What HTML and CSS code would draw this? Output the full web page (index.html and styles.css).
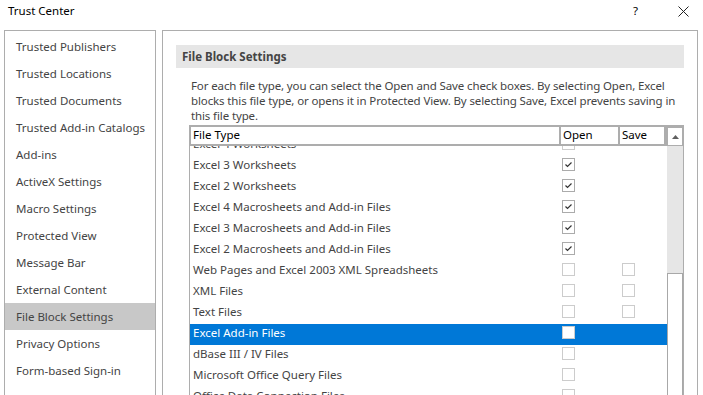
FILE: index.html
```html
<!DOCTYPE html>
<html lang="en">
<head>
    <meta charset="UTF-8">
    <title>Trust Center</title>
    <link rel="stylesheet" href="styles.css">
</head>
<body>
    <div class="titlebar">
        <div class="title">Trust Center</div>
        <div class="help">?</div>
        <div class="close">
            <svg width="11" height="11" viewBox="0 0 11 11"><path d="M0.5 0.5 L10.5 10.5 M10.5 0.5 L0.5 10.5" stroke="#222" stroke-width="1" fill="none"/></svg>
        </div>
    </div>
    <div class="main">
        <div class="nav">
            <div class="nav-item">Trusted Publishers</div>
            <div class="nav-item">Trusted Locations</div>
            <div class="nav-item">Trusted Documents</div>
            <div class="nav-item">Trusted Add-in Catalogs</div>
            <div class="nav-item">Add-ins</div>
            <div class="nav-item">ActiveX Settings</div>
            <div class="nav-item">Macro Settings</div>
            <div class="nav-item">Protected View</div>
            <div class="nav-item">Message Bar</div>
            <div class="nav-item">External Content</div>
            <div class="nav-item active">File Block Settings</div>
            <div class="nav-item">Privacy Options</div>
            <div class="nav-item">Form-based Sign-in</div>
        </div>
        <div class="content">
            <div class="section-title">File Block Settings</div>
            <div class="desc">
                For each file type, you can select the Open and Save check boxes. By selecting Open, Excel<br>
                blocks this file type, or opens it in Protected View. By selecting Save, Excel prevents saving in<br>
                this file type.
            </div>
            <div class="table">
                <div class="list">
                    <div class="thead">
                        <div class="th th-type">File Type</div>
                        <div class="th th-open">Open</div>
                        <div class="th th-save">Save</div>
                    </div>
                    <div class="rows">
                        <div class="row first">
                            <div class="name">Excel 4 Worksheets</div>
                            <div class="cell"><span class="cb"></span></div>
                        </div>
                        <div class="row">
                            <div class="name">Excel 3 Worksheets</div>
                            <div class="cell"><span class="cb checked"><svg width="11" height="11" viewBox="0 0 11 11"><path d="M2.5 5.5 L4.5 7.5 L8.5 3.5" stroke="#333" stroke-width="1.2" fill="none"/></svg></span></div>
                        </div>
                        <div class="row">
                            <div class="name">Excel 2 Worksheets</div>
                            <div class="cell"><span class="cb checked"><svg width="11" height="11" viewBox="0 0 11 11"><path d="M2.5 5.5 L4.5 7.5 L8.5 3.5" stroke="#333" stroke-width="1.2" fill="none"/></svg></span></div>
                        </div>
                        <div class="row">
                            <div class="name">Excel 4 Macrosheets and Add-in Files</div>
                            <div class="cell"><span class="cb checked"><svg width="11" height="11" viewBox="0 0 11 11"><path d="M2.5 5.5 L4.5 7.5 L8.5 3.5" stroke="#333" stroke-width="1.2" fill="none"/></svg></span></div>
                        </div>
                        <div class="row">
                            <div class="name">Excel 3 Macrosheets and Add-in Files</div>
                            <div class="cell"><span class="cb checked"><svg width="11" height="11" viewBox="0 0 11 11"><path d="M2.5 5.5 L4.5 7.5 L8.5 3.5" stroke="#333" stroke-width="1.2" fill="none"/></svg></span></div>
                        </div>
                        <div class="row">
                            <div class="name">Excel 2 Macrosheets and Add-in Files</div>
                            <div class="cell"><span class="cb checked"><svg width="11" height="11" viewBox="0 0 11 11"><path d="M2.5 5.5 L4.5 7.5 L8.5 3.5" stroke="#333" stroke-width="1.2" fill="none"/></svg></span></div>
                        </div>
                        <div class="row">
                            <div class="name">Web Pages and Excel 2003 XML Spreadsheets</div>
                            <div class="cell"><span class="cb"></span></div>
                            <div class="cell"><span class="cb"></span></div>
                        </div>
                        <div class="row">
                            <div class="name">XML Files</div>
                            <div class="cell"><span class="cb"></span></div>
                            <div class="cell"><span class="cb"></span></div>
                        </div>
                        <div class="row">
                            <div class="name">Text Files</div>
                            <div class="cell"><span class="cb"></span></div>
                            <div class="cell"><span class="cb"></span></div>
                        </div>
                        <div class="row selected">
                            <div class="name">Excel Add-in Files</div>
                            <div class="cell"><span class="cb"></span></div>
                        </div>
                        <div class="row">
                            <div class="name">dBase III / IV Files</div>
                            <div class="cell"><span class="cb"></span></div>
                        </div>
                        <div class="row">
                            <div class="name">Microsoft Office Query Files</div>
                            <div class="cell"><span class="cb"></span></div>
                        </div>
                        <div class="row">
                            <div class="name">Office Data Connection Files</div>
                            <div class="cell"><span class="cb"></span></div>
                        </div>
                    </div>
                </div>
                <div class="vscroll">
                    <div class="arrow-up">
                        <svg width="7" height="4" viewBox="0 0 7 4"><path d="M0 4 L3.5 0 L7 4 Z" fill="#606060"/></svg>
                    </div>
                    <div class="track"></div>
                    <div class="thumb"></div>
                </div>
            </div>
        </div>
    </div>
</body>
</html>
```

FILE: styles.css
```css
body {
    margin: 0;
    width: 703px;
    height: 395px;
    overflow: hidden;
    background: #ffffff;
    font-family: 'Noto Sans', 'Open Sans', sans-serif;
    font-size: 11.5px;
    color: #444444;
}
.titlebar {
    height: 30px;
    display: flex;
    align-items: center;
}
.title {
    flex: 1;
    padding-left: 8px;
    margin-top: -10px;
    color: #000000;
}
.help {
    width: 45px;
    margin-top: -10px;
    color: #000000;
}
.close {
    width: 25px;
    margin-top: -9px;
    height: 11px;
}
.main {
    display: flex;
    gap: 6px;
    padding-left: 4px;
    height: 365px;
}
.nav {
    flex-shrink: 0;
    width: 150px;
    border: 1px solid #adadad;
    border-bottom: none;
    padding-top: 2px;
}
.nav-item {
    height: 27px;
    line-height: 27px;
    padding-left: 11px;
    white-space: nowrap;
}
.nav-item.active {
    background: #c8c8c8;
}
.content {
    flex-shrink: 0;
    width: 521px;
    border: 1px solid #adadad;
    border-bottom: none;
    padding: 14px 0 0 13px;
    display: flex;
    flex-direction: column;
}
.section-title {
    width: 502px;
    height: 23px;
    line-height: 23px;
    padding-left: 6px;
    background: #e6e6e6;
    font-weight: bold;
}
.desc {
    margin: 10px 0 2px 15px;
    line-height: 15px;
    white-space: nowrap;
    letter-spacing: -0.12px;
}
.table {
    margin-left: 13px;
    width: 494px;
    flex: 1;
    display: flex;
    border-top: 2px solid #adadad;
    border-right: 1px solid #adadad;
    overflow: hidden;
}
.list {
    flex-shrink: 0;
    width: 477px;
    border-left: 1px solid #adadad;
    display: flex;
    flex-direction: column;
}
.thead {
    display: flex;
    gap: 2px;
    padding: 0 0 2px 1px;
    background: #adadad;
    position: relative;
    z-index: 1;
}
.th {
    flex-shrink: 0;
    height: 17px;
    line-height: 16px;
    background: #ffffff;
    color: #000000;
    padding-left: 2px;
    box-sizing: border-box;
}
.th-type { width: 368px; }
.th-open { width: 57px; }
.th-save { width: 44px; }
.rows {
    flex: 1;
}
.row {
    height: 21px;
    display: flex;
}
.row.first {
    margin-top: -11px;
}
.row.selected {
    background: #0078d7;
    color: #ffffff;
}
.name {
    flex-shrink: 0;
    width: 369px;
    padding-left: 3px;
    line-height: 18px;
    white-space: nowrap;
}
.cell {
    flex-shrink: 0;
    width: 60px;
    padding-top: 2px;
}
.cb {
    display: block;
    width: 11px;
    height: 11px;
    border: 1px solid #cccccc;
    background: #ffffff;
}
.cb.checked {
    border-color: #ababab;
}
.cb svg {
    display: block;
}
.vscroll {
    flex-shrink: 0;
    width: 16px;
    display: flex;
    flex-direction: column;
    background: #e6e6e6;
}
.arrow-up {
    height: 17px;
    width: 14px;
    border: 1px solid #adadad;
    background: #ffffff;
    display: flex;
    align-items: center;
    justify-content: center;
}
.track {
    height: 127px;
}
.thumb {
    flex: 1;
    width: 14px;
    border: 1px solid #a8a8a8;
    border-bottom: none;
    background: #ffffff;
}
```
